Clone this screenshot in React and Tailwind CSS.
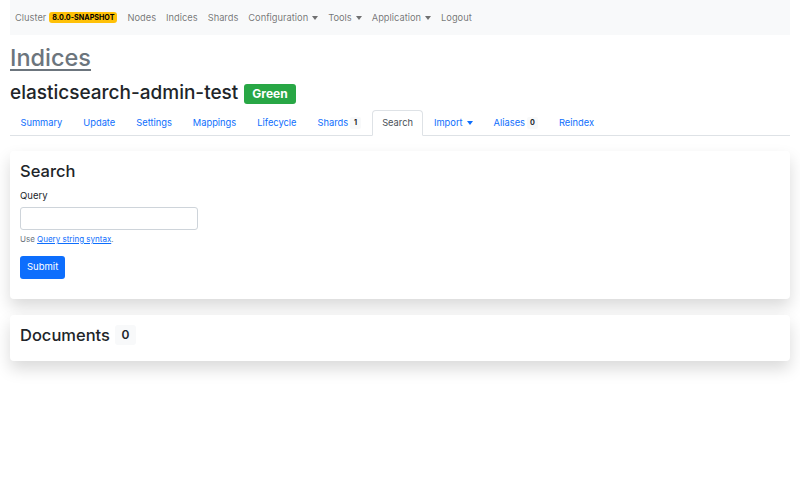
import React from "react";

const Caret = () => (
  <span className="inline-block w-0 h-0 ml-[4px] align-[2px] border-t-[4px] border-x-[3.5px] border-x-transparent" />
);

const navItems = [
  { label: "Nodes" },
  { label: "Indices" },
  { label: "Shards" },
  { label: "Configuration", caret: true },
  { label: "Tools", caret: true },
  { label: "Application", caret: true },
  { label: "Logout" },
];

const tabs = [
  { label: "Summary" },
  { label: "Update" },
  { label: "Settings" },
  { label: "Mappings" },
  { label: "Lifecycle" },
  { label: "Shards", badge: "1" },
  { label: "Search", active: true },
  { label: "Import", caret: true },
  { label: "Aliases", badge: "0" },
  { label: "Reindex" },
];

export default function App() {
  return (
    <div className="min-h-[480px] bg-white px-[10px] font-['Inter',sans-serif] text-[#212529]">
      {/* Navbar */}
      <nav className="h-[35px] bg-[#f8f9fa] flex items-center text-[9.3px] leading-[15px] text-[rgba(0,0,0,0.55)]">
        <span className="px-[5px] flex items-center">
          Cluster
          <span className="ml-[3px] inline-flex items-center h-[11px] px-[3px] rounded-[3px] bg-[#ffc107] text-black text-[7.2px] font-bold">
            8.0.0-SNAPSHOT
          </span>
        </span>
        {navItems.map((item) => (
          <span key={item.label} className="px-[5px] flex items-center">
            {item.label}
            {item.caret && <Caret />}
          </span>
        ))}
      </nav>

      {/* Titles */}
      <h1 className="mt-[8px] text-[23.5px] leading-[30px] font-medium">
        <a href="#" className="text-[#6c757d] underline decoration-[1.5px] underline-offset-[3px]">
          Indices
        </a>
      </h1>
      <h2 className="mt-[8px] text-[19px] leading-[23px] font-medium flex items-center">
        elasticsearch-admin-test
        <span className="ml-[6px] mt-[2px] inline-flex items-center h-[20px] px-[8px] rounded-[3px] bg-[#28a745] text-white text-[12px] font-bold">
          Green
        </span>
      </h2>

      {/* Tabs */}
      <ul className="mt-[6px] flex border-b border-[#dee2e6] text-[9.3px]">
        {tabs.map((t) => (
          <li key={t.label} className="-mb-px">
            <a
              href="#"
              className={
                t.active
                  ? "h-[26px] px-[9.5px] flex items-center border border-[#dee2e6] border-b-white bg-white rounded-t-[4px] text-[#495057]"
                  : "h-[26px] px-[9.5px] flex items-center border border-transparent text-[#0d6efd]"
              }
            >
              {t.label}
              {t.caret && <Caret />}
              {t.badge && (
                <span className="ml-[2px] inline-flex items-center justify-center w-[11px] h-[12px] rounded-[2px] bg-[#f8f9fa] text-[#212529] text-[7.2px] font-bold">
                  {t.badge}
                </span>
              )}
            </a>
          </li>
        ))}
      </ul>

      {/* Search card */}
      <div className="mt-[15px] bg-white rounded-[4px] shadow-[0_8px_16px_rgba(0,0,0,0.15)] p-[10px]">
        <h4 className="text-[16.5px] leading-[20px] font-medium mb-[7px]">Search</h4>
        <label className="block text-[9.5px] leading-[15px] mb-[4px]">Query</label>
        <input
          type="text"
          className="block w-[178px] h-[23px] border border-[#ced4da] rounded-[3px] px-[6px] text-[10px] outline-none"
        />
        <div className="mt-[3px] text-[8px] leading-[12px] text-[#6c757d]">
          Use{" "}
          <a href="#" className="text-[#0d6efd] underline">
            Query string syntax
          </a>
          .
        </div>
        <button className="mt-[11px] mb-[10px] h-[23px] px-[7px] rounded-[3px] bg-[#0d6efd] text-white text-[9.5px]">
          Submit
        </button>
      </div>

      {/* Documents card */}
      <div className="mt-[16px] bg-white rounded-[4px] shadow-[0_8px_16px_rgba(0,0,0,0.15)] px-[10px] pt-[10px] pb-[16px]">
        <h4 className="text-[16.5px] leading-[20px] font-medium flex items-center">
          Documents
          <span className="ml-[5px] inline-flex items-center justify-center w-[21px] h-[20px] rounded-[3px] bg-[#f8f9fa] text-[#212529] text-[12px] font-semibold">
            0
          </span>
        </h4>
      </div>
    </div>
  );
}
